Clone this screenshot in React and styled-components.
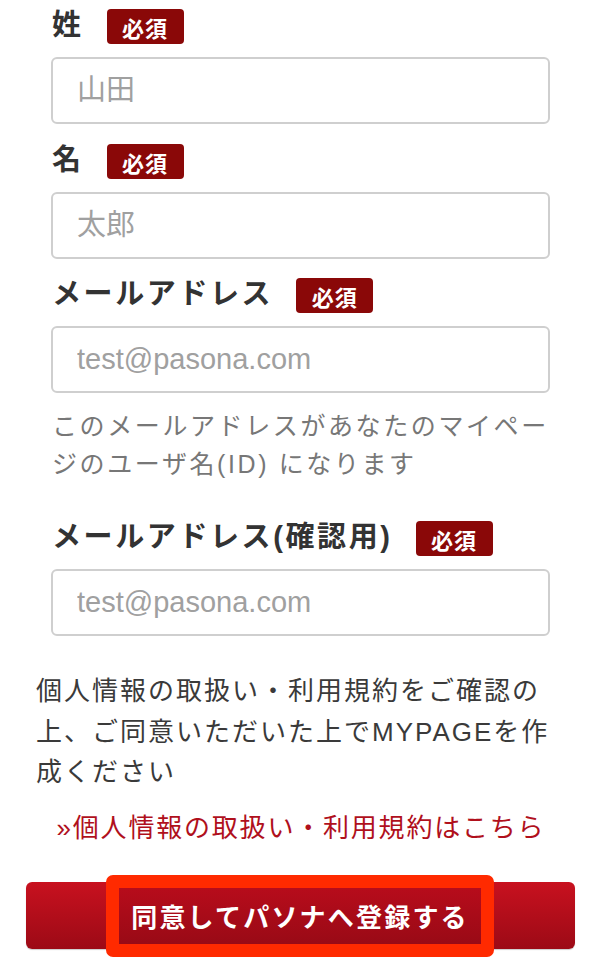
import React from "react";
import styled, { createGlobalStyle } from "styled-components";

const Global = createGlobalStyle`
  html, body { margin: 0; padding: 0; background: #fff; }
  body {
    font-family: "Liberation Sans", "Noto Sans CJK JP", sans-serif;
    color: #333;
  }
  * { box-sizing: border-box; }
`;

const Page = styled.div`
  width: 594px;
  padding-top: 9px;
  padding-bottom: 20px;
`;

const Fields = styled.div`
  display: flex;
  flex-direction: column;
  padding: 0 44px 0 51px;
`;

const Field = styled.div`
  display: flex;
  flex-direction: column;
  margin-top: ${(p) => p.$top || 0}px;
`;

const LabelRow = styled.div`
  display: flex;
  align-items: center;
  height: 35px;
  margin-bottom: 13px;
`;

const Label = styled.span`
  font-size: 29px;
  font-weight: 700;
  color: #333;
  letter-spacing: 2.6px;
  line-height: 35px;
  padding-left: 1px;
  margin-top: -3px;
`;

const Badge = styled.span`
  display: inline-flex;
  align-items: center;
  justify-content: center;
  width: 77px;
  height: 35px;
  margin-left: 23px;
  background: #8a0808;
  border-radius: 4px;
  color: #fff;
  font-size: 22px;
  font-weight: 700;
  letter-spacing: 1px;
`;

const Input = styled.input`
  width: 499px;
  height: 67px;
  border: 2px solid #cfcfcf;
  border-radius: 6px;
  padding: 0 24px;
  font-family: inherit;
  font-size: 29px;
  color: #333;
  background: #fff;
  outline: none;
  &::placeholder { color: #a0a0a0; }
`;

const Help = styled.p`
  margin: 14px 0 0;
  padding-left: 1px;
  font-size: 25px;
  line-height: 38px;
  letter-spacing: 2.6px;
  color: #777;
`;

const Consent = styled.p`
  margin: 35px 0 0;
  padding: 0 30px 0 36px;
  font-size: 26px;
  line-height: 40.5px;
  letter-spacing: 2px;
  color: #3a3a3a;
`;

const TermsLink = styled.a`
  display: block;
  margin-top: 15px;
  text-align: center;
  font-size: 26px;
  line-height: 40px;
  letter-spacing: 1.8px;
  color: #b0101c;
  text-decoration: none;
  padding-left: 8px;
`;

const ButtonWrap = styled.div`
  position: relative;
  margin: 34px 19px 0 26px;
`;

const Submit = styled.button`
  width: 100%;
  height: 67px;
  border: none;
  border-radius: 6px;
  background: linear-gradient(#c8111f, #9c0a16);
  box-shadow: 0 1px 1px rgba(0, 0, 0, 0.2);
  color: #fff;
  font-family: inherit;
  font-size: 26px;
  font-weight: 700;
  letter-spacing: 2.2px;
  cursor: pointer;
`;

const Highlight = styled.div`
  position: absolute;
  left: 80px;
  top: -7px;
  width: 388px;
  height: 82px;
  border: 13px solid #ff2a00;
  border-radius: 7px;
  background: linear-gradient(#b70c1b, #990a16);
  display: flex;
  align-items: center;
  justify-content: center;
  color: #fff;
  font-size: 26px;
  font-weight: 700;
  letter-spacing: 2.2px;
  pointer-events: none;
`;

const fields = [
  { label: "姓", placeholder: "山田", top: 0 },
  { label: "名", placeholder: "太郎", top: 20 },
  { label: "メールアドレス", placeholder: "test@pasona.com", top: 19, help: true },
  { label: "メールアドレス(確認用)", placeholder: "test@pasona.com", top: 38 },
];

export default function App() {
  return (
    <>
      <Global />
      <Page>
        <Fields>
          {fields.map((f, i) => (
            <Field key={i} $top={f.top}>
              <LabelRow>
                <Label>{f.label}</Label>
                <Badge>必須</Badge>
              </LabelRow>
              <Input placeholder={f.placeholder} />
              {f.help && (
                <Help>このメールアドレスがあなたのマイページのユーザ名(ID) になります</Help>
              )}
            </Field>
          ))}
        </Fields>
        <Consent>
          個人情報の取扱い・利用規約をご確認の上、ご同意いただいた上でMYPAGEを作成ください
        </Consent>
        <TermsLink href="#">»個人情報の取扱い・利用規約はこちら</TermsLink>
        <ButtonWrap>
          <Submit>同意してパソナへ登録する</Submit>
          <Highlight>同意してパソナへ登録する</Highlight>
        </ButtonWrap>
      </Page>
    </>
  );
}
